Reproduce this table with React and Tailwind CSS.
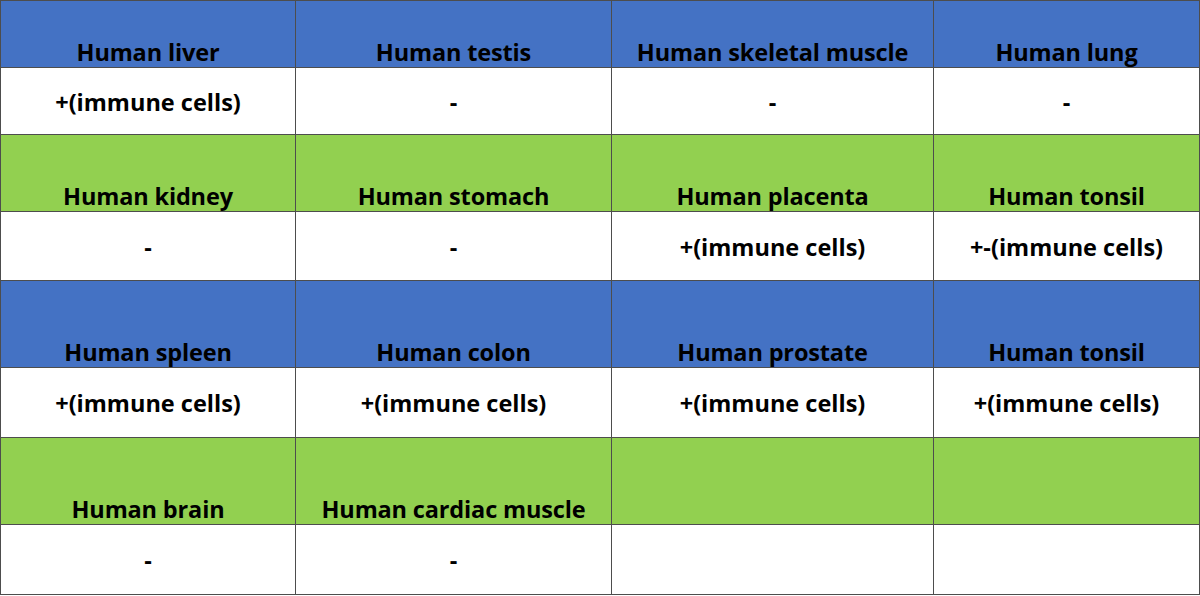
export default function App() {
  const cols = "grid-cols-[294px_315px_321px_265px]";
  const rows = [
    { type: "h", color: "bg-[#4472c4]", h: "h-[66px]", cells: ["Human liver", "Human testis", "Human skeletal muscle", "Human lung"] },
    { type: "d", h: "h-[66px]", cells: ["+(immune cells)", "-", "-", "-"] },
    { type: "h", color: "bg-[#92d050]", h: "h-[76px]", cells: ["Human kidney", "Human stomach", "Human placenta", "Human tonsil"] },
    { type: "d", h: "h-[68px]", cells: ["-", "-", "+(immune cells)", "+-(immune cells)"] },
    { type: "h", color: "bg-[#4472c4]", h: "h-[86px]", cells: ["Human spleen", "Human colon", "Human prostate", "Human tonsil"] },
    { type: "d", h: "h-[69px]", cells: ["+(immune cells)", "+(immune cells)", "+(immune cells)", "+(immune cells)"] },
    { type: "h", color: "bg-[#92d050]", h: "h-[86px]", cells: ["Human brain", "Human cardiac muscle", "", ""] },
    { type: "d", h: "h-[69px]", cells: ["-", "-", "", ""] },
  ];
  return (
    <div className="w-[1200px] h-[596px] bg-white">
      <div
        className={`grid ${cols} gap-px bg-[#4d4d4d] border border-[#4d4d4d] w-[1200px]`}
        style={{ fontFamily: "'Open Sans', Lato, sans-serif" }}
      >
        {rows.map((r, i) =>
          r.cells.map((c, j) =>
            r.type === "h" ? (
              <div
                key={`${i}-${j}`}
                className={`${r.color} ${r.h} flex items-end justify-center pb-[3px] text-[23.5px] font-bold text-black leading-none whitespace-nowrap tracking-[-0.15px]`}
              >
                {c}
              </div>
            ) : (
              <div
                key={`${i}-${j}`}
                className={`bg-white ${r.h} flex items-center justify-center pt-[3px] text-[23.5px] font-bold text-black leading-none whitespace-nowrap`}
              >
                {c}
              </div>
            )
          )
        )}
      </div>
    </div>
  );
}
